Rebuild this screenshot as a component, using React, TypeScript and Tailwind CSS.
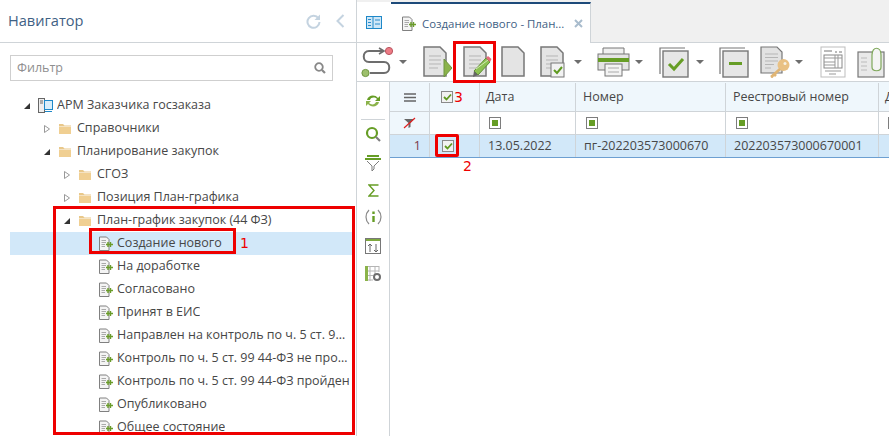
import type { ReactNode } from "react";

const font = "font-['Open_Sans','Noto_Sans',sans-serif]";
const rowText = "text-[12.5px] text-[#474747]";
const markText = "absolute font-['DejaVu_Sans',sans-serif] text-[14px] leading-[18px] text-[#ee0000]";

function Arrow({ open }: { open?: boolean }) {
  return (
    <svg width="8" height="8" viewBox="0 0 8 8" className="shrink-0">
      {open ? (
        <path d="M1 7 L7 7 L7 1 Z" fill="#333" />
      ) : (
        <path d="M1.500 0.500 L6.500 4 L1.500 7.500 Z" fill="#fff" stroke="#999" />
      )}
    </svg>
  );
}

function Folder() {
  return (
    <svg width="14" height="12" viewBox="0 0 14 12" className="shrink-0">
      <path d="M1 1 H5 L6.500 2.500 H13 V3.500 H1 Z" fill="#e9c88a" />
      <rect x="1" y="4" width="12" height="7" fill="#f0cf92" />
    </svg>
  );
}

function PlanDoc() {
  return (
    <svg width="16" height="16" viewBox="0 0 16 16" className="shrink-0">
      <path d="M1.500 1 H8.500 L11 3.500 V14.500 H1.500 Z" fill="#f4f4f4" stroke="#808080" />
      <path d="M3.500 4.500 H8 M3.500 6.500 H8 M3.500 8.500 H7 M3.500 10.500 H7" stroke="#aaa" />
      <path d="M8 8.500 H15 M10 6 V11 M12.500 6 V11" stroke="#6a9c2a" strokeWidth="1.400" />
    </svg>
  );
}

function TreeRow({
  pad,
  label,
  open,
  icon,
}: {
  pad: string;
  label: string;
  open?: boolean;
  icon?: ReactNode;
}) {
  return (
    <div className={`flex h-[23px] items-center ${pad}`}>
      <Arrow open={open} />
      <div className="ml-[7px]">{icon ?? <Folder />}</div>
      <span className={`${icon ? "ml-[4px]" : "ml-[5px]"} truncate ${rowText}`}>{label}</span>
    </div>
  );
}

function LeafRow({ label, selected }: { label: string; selected?: boolean }) {
  return (
    <div className={`flex h-[23px] items-center pl-[88px] ${selected ? "bg-[#d2e8f9]" : ""}`}>
      <PlanDoc />
      <span className={`ml-[3px] truncate ${rowText}`}>{label}</span>
    </div>
  );
}

function Caret({ className = "" }: { className?: string }) {
  return (
    <svg width="8" height="4" viewBox="0 0 8 4" className={`shrink-0 ${className}`}>
      <path d="M0 0 H8 L4 4 Z" fill="#6e6e6e" />
    </svg>
  );
}

function DocLines() {
  return <path d="M6 10 H18 M6 14 H18 M6 18 H18 M6 22 H15" stroke="#b5b5b5" />;
}

function PageShape() {
  return <path d="M1 1 H17 L23 7 V30 H1 Z" fill="#e4e4e4" stroke="#777" strokeWidth="1.500" />;
}

function Toolbar() {
  return (
    <div className="flex h-[39px] items-center border-b border-[#cfd4d8]">
      <svg width="32" height="32" viewBox="0 0 32 32" className="ml-[4px] shrink-0">
        <path d="M23 5 H8 C1 5 1 16 8 16 H23 C30 16 30 27 23 27 H9" fill="none" stroke="#6d6d6d" strokeWidth="2" />
        <path d="M18 2 L23 5 L18 8" fill="none" stroke="#6d6d6d" strokeWidth="1.600" />
        <circle cx="28" cy="5" r="3.600" fill="#ee7b85" stroke="#b85560" />
        <circle cx="4.500" cy="27" r="3.600" fill="#9dc06c" stroke="#6f9640" />
      </svg>
      <Caret className="ml-[6px]" />
      <svg width="29" height="32" viewBox="0 0 29 32" className="ml-[16px] shrink-0">
        <PageShape />
        <DocLines />
        <path d="M21 13 L29 22 L21 31 Z" fill="#8bb34a" stroke="#6f9640" />
      </svg>
      <svg width="29" height="33" viewBox="0 0 29 33" className="ml-[11px] shrink-0">
        <PageShape />
        <DocLines />
        <path d="M11 25 L23 12 L27 16 L15 29 Z" fill="#8cc152" stroke="#5f8f35" />
        <path d="M13 23 L25 14" stroke="#d5e8b8" />
        <path d="M23 12 L25 10 L28.500 13 L27 16 Z" fill="#e66b7a" />
        <path d="M11 25 L15 29 L10 31 Z" fill="#666" />
      </svg>
      <svg width="24" height="32" viewBox="0 0 24 32" className="ml-[9px] shrink-0">
        <PageShape />
      </svg>
      <svg width="25" height="33" viewBox="0 0 25 33" className="ml-[15px] shrink-0">
        <PageShape />
        <DocLines />
        <rect x="11" y="17" width="13" height="14" fill="#f2f2f2" stroke="#777" />
        <path d="M14 24 L17 27 L22 21" fill="none" stroke="#5f9a20" strokeWidth="2" />
      </svg>
      <Caret className="ml-[9px]" />
      <svg width="33" height="30" viewBox="0 0 33 30" className="ml-[15px] shrink-0">
        <path d="M6 7 V1 H27 V7" fill="#f0f0f0" stroke="#777" />
        <rect x="1" y="7" width="31" height="16" fill="#e4e4e4" stroke="#777" />
        <rect x="1" y="11" width="31" height="4" fill="#669d25" />
        <rect x="8" y="17" width="17" height="12" fill="#f4f4f4" stroke="#777" />
        <path d="M11 21 H22 M11 25 H22" stroke="#aaa" />
      </svg>
      <Caret className="ml-[5px]" />
      <svg width="30" height="31" viewBox="0 0 30 31" className="ml-[16px] shrink-0">
        <path d="M1 27 V1 H26" fill="none" stroke="#777" strokeWidth="1.200" />
        <rect x="4" y="4" width="25" height="26" fill="#e6e6e6" stroke="#777" strokeWidth="1.400" />
        <path d="M10 17 L15 22 L24 12" fill="none" stroke="#669d25" strokeWidth="3" />
      </svg>
      <Caret className="ml-[7px]" />
      <svg width="30" height="31" viewBox="0 0 30 31" className="ml-[15px] shrink-0">
        <path d="M1 27 V1 H26" fill="none" stroke="#777" strokeWidth="1.200" />
        <rect x="4" y="4" width="25" height="26" fill="#e6e6e6" stroke="#777" strokeWidth="1.400" />
        <rect x="10" y="15" width="13" height="3" fill="#669d25" />
      </svg>
      <svg width="30" height="32" viewBox="0 0 30 32" className="ml-[11px] shrink-0">
        <path d="M1 1 H17 L22 6 V27 H1 Z" fill="#e2e2e2" stroke="#777" strokeWidth="1.200" />
        <path d="M5 8 H18 M5 11.500 H18 M5 15 H18 M5 18.500 H14 M5 22 H11" stroke="#b5b5b5" strokeWidth="1.200" />
        <circle cx="23.500" cy="19" r="6" fill="#e9c184" />
        <circle cx="25" cy="17.500" r="1.500" fill="#f7f2e6" />
        <path d="M20 23 L11 31 M14 28 L16 30 M11.500 30 L13 31.500" stroke="#e0b574" strokeWidth="2.600" />
      </svg>
      <Caret className="ml-[5px]" />
      <svg width="26" height="32" viewBox="0 0 26 32" className="ml-[17px] shrink-0">
        <rect x="1" y="1" width="24" height="30" fill="#fff" stroke="#bdbdbd" />
        <path d="M4 5 H12 M15 6 H17 M19 6 H22" stroke="#777" strokeWidth="1.200" />
        <rect x="4" y="9" width="18" height="13" fill="#fff" stroke="#888" />
        <path d="M4 12 H22 M15 9 V22 M18 9 V22 M4 16 H15 M4 19 H15 M5 25 H21 M9 28 H16" stroke="#999" />
      </svg>
      <svg width="28" height="31" viewBox="0 0 28 31" className="ml-[11px] shrink-0">
        <rect x="1" y="5" width="26" height="25" fill="#e9e9e9" stroke="#777" strokeWidth="1.200" />
        <path d="M4 11 H10 M4 15 H10 M4 19 H10 M4 23 H10" stroke="#bbb" strokeWidth="1.200" />
        <path d="M15 8 C15 -1 24 -1 24 8 V20 C24 25 15 25 15 20 Z" fill="#f4f4f4" stroke="#7fa85a" strokeWidth="1.200" />
      </svg>
    </div>
  );
}

function SideRail() {
  return (
    <div className="flex w-[33px] shrink-0 flex-col items-center border-r border-[#cfd4d8] pt-[12px]">
      <svg width="16" height="14" viewBox="0 0 16 14">
        <path d="M2 6 C3 1 10 0 13 4 L15 2 V7 H10 L12 5 C10 3 6 3 5 6 Z" fill="#669d25" />
        <path d="M14 8 C13 13 6 14 3 10 L1 12 V7 H6 L4 9 C6 11 10 11 11 8 Z" fill="#8bb34a" />
      </svg>
      <div className="mt-[11px] h-px w-[24px] bg-[#cfd4d8]" />
      <svg width="16" height="16" viewBox="0 0 16 16" className="mt-[6px]">
        <circle cx="7" cy="7" r="5" fill="#fff" stroke="#669d25" strokeWidth="2.200" />
        <path d="M11 11 L15 15" stroke="#7d7d7d" strokeWidth="2.200" />
      </svg>
      <svg width="16" height="18" viewBox="0 0 16 18" className="mt-[11px]">
        <path d="M0 6 H16 M2 3 H14" stroke="#669d25" strokeWidth="2" />
        <path d="M2 8 L7 13 V18 L9 16 V13 L14 8" fill="none" stroke="#7d7d7d" />
      </svg>
      <svg width="11" height="13" viewBox="0 0 11 13" className="mt-[13px]">
        <path d="M10.500 1 H1 L6 6.500 L1 12 H10.500" fill="none" stroke="#669d25" strokeWidth="1.400" />
      </svg>
      <svg width="17" height="16" viewBox="0 0 17 16" className="mt-[12px]">
        <path d="M4 1 C0 5 0 11 4 15 M13 1 C17 5 17 11 13 15" fill="none" stroke="#8a8a8a" strokeWidth="1.200" />
        <path d="M8.500 2.500 V5 M8.500 7 V13" stroke="#669d25" strokeWidth="2.400" />
      </svg>
      <svg width="16" height="16" viewBox="0 0 16 16" className="mt-[13px]">
        <rect x="0.500" y="0.500" width="15" height="15" fill="#fff" stroke="#777" />
        <rect x="1" y="1" width="14" height="2" fill="#7da83e" />
        <path d="M5 14 V6 M3 8 L5 6 L7 8 M11 6 V14 M9 12 L11 14 L13 12" fill="none" stroke="#666" />
      </svg>
      <svg width="17" height="16" viewBox="0 0 17 16" className="mt-[12px]">
        <path d="M0.500 0.500 H14 M0.500 5 H14 M0.500 9.500 H8 M0.500 14 H8 M5 0 V15 M10 0 V8 M14 0 V6" stroke="#b5b5b5" />
        <rect x="0" y="0" width="3" height="15" fill="#8bb34a" />
        <circle cx="12" cy="11" r="3" fill="none" stroke="#6d6d6d" strokeWidth="2" />
      </svg>
    </div>
  );
}

function CheckBox() {
  return (
    <span className="flex h-[12px] w-[12px] items-center justify-center border border-[#8a8a8a] bg-[#f2f2f2]">
      <svg width="9" height="8" viewBox="0 0 9 8">
        <path d="M1 4 L3.500 6.500 L8 1.500" fill="none" stroke="#5f9a20" strokeWidth="1.800" />
      </svg>
    </span>
  );
}

function FilterBox() {
  return (
    <span className="flex h-[12px] w-[12px] items-center justify-center border border-[#7d7d7d] bg-white">
      <span className="h-[6px] w-[6px] bg-[#669d25]" />
    </span>
  );
}

const colClass = "flex shrink-0 items-center border-r border-[#cfd4d8]";

function Grid() {
  const cols = ["w-[96px]", "w-[150px]", "w-[153px]"];
  return (
    <div className="min-w-0 flex-1 overflow-hidden">
      <div className={`flex h-[29px] bg-[#eff7fc] pt-[1px] ${rowText}`}>
        <div className={`${colClass} w-[40px] justify-center`}>
          <svg width="12" height="9" viewBox="0 0 12 9">
            <path d="M0 1 H12 M0 4.500 H12 M0 8 H12" stroke="#666" strokeWidth="1.600" />
          </svg>
        </div>
        <div className={`${colClass} w-[50px] pl-[11px]`}>
          <CheckBox />
        </div>
        <div className={`${colClass} ${cols[0]} pl-[6px]`}>Дата</div>
        <div className={`${colClass} ${cols[1]} pl-[7px]`}>Номер</div>
        <div className={`${colClass} ${cols[2]} pl-[7px]`}>Реестровый номер</div>
        <div className="flex shrink-0 items-center pl-[6px]">Дата</div>
      </div>
      <div className="flex h-[24px] border-y border-[#cfd4d8] bg-white">
        <div className={`${colClass} w-[40px] justify-center bg-[#eff7fc]`}>
          <svg width="13" height="12" viewBox="0 0 13 12">
            <path d="M1 2 H11 L7.500 6 V10 L5.500 11 V6 Z" fill="#666" />
            <path d="M1 11 L12 1" stroke="#e02020" strokeWidth="1.200" />
          </svg>
        </div>
        <div className={`${colClass} w-[50px]`} />
        <div className={`${colClass} ${cols[0]} pl-[9px]`}>
          <FilterBox />
        </div>
        <div className={`${colClass} ${cols[1]} pl-[10px]`}>
          <FilterBox />
        </div>
        <div className={`${colClass} ${cols[2]} pl-[10px]`}>
          <FilterBox />
        </div>
        <div className="flex shrink-0 items-center pl-[9px]">
          <FilterBox />
        </div>
      </div>
      <div className={`flex h-[23px] border-b border-[#6d9fd1] bg-[#d2e8f9] ${rowText}`}>
        <div className={`${colClass} w-[40px] justify-end pr-[8px] text-[#7a3a4a]`}>1</div>
        <div className={`${colClass} w-[50px] pl-[12px]`}>
          <CheckBox />
        </div>
        <div className={`${colClass} ${cols[0]} pl-[8px]`}>13.05.2022</div>
        <div className={`${colClass} ${cols[1]} pl-[8px]`}>пг-202203573000670</div>
        <div className={`${colClass} ${cols[2]} pl-[8px]`}>202203573000670001</div>
      </div>
    </div>
  );
}

const leafItems = [
  "На доработке",
  "Согласовано",
  "Принят в ЕИС",
  "Направлен на контроль по ч. 5 ст. 99 44-ФЗ",
  "Контроль по ч. 5 ст. 99 44-ФЗ не пройден",
  "Контроль по ч. 5 ст. 99 44-ФЗ пройден",
  "Опубликовано",
  "Общее состояние",
];

export default function App() {
  return (
    <div className={`relative flex h-[436px] w-[889px] overflow-hidden bg-white ${font}`}>
      <div className="flex w-[357px] shrink-0 flex-col border-r border-[#cfd4d8]">
        <div className="flex h-[43px] shrink-0 items-center border-b border-[#cfd4d8] pl-[8px] pr-[11px]">
          <span className="text-[14.6px] text-[#3f6184]">Навигатор</span>
          <svg width="15" height="15" viewBox="0 0 15 15" className="ml-auto">
            <path d="M12.500 4.500 A6 6 0 1 0 13.500 8" fill="none" stroke="#c4d3e0" strokeWidth="2" />
            <path d="M14 0.500 V6 H8.500 Z" fill="#c4d3e0" />
          </svg>
          <svg width="9" height="14" viewBox="0 0 9 14" className="ml-[15px]">
            <path d="M7.500 1 L1.500 7 L7.500 13" fill="none" stroke="#c4d3e0" strokeWidth="2" />
          </svg>
        </div>
        <div className="ml-[10px] mr-[23px] mt-[12px] flex h-[26px] shrink-0 items-center border border-[#cfcfcf] pl-[6px] pr-[6px]">
          <span className="text-[12.5px] text-[#8f8f8f]">Фильтр</span>
          <svg width="12" height="12" viewBox="0 0 12 12" className="ml-auto">
            <circle cx="5" cy="5" r="3.800" fill="none" stroke="#888" strokeWidth="1.800" />
            <path d="M8 8 L11 11" stroke="#888" strokeWidth="2.200" />
          </svg>
        </div>
        <div className="mt-[13px] min-h-0 flex-1 overflow-hidden">
          <TreeRow
            pad="pl-[23px]"
            label="АРМ Заказчика госзаказа"
            open
            icon={
              <svg width="15" height="15" viewBox="0 0 15 15" className="shrink-0">
                <rect x="0.500" y="0.500" width="6" height="14" fill="#eee" stroke="#666" />
                <path d="M2 3 H5 M2 5 H5" stroke="#666" />
                <rect x="6.500" y="2.500" width="8" height="9" fill="#d8eefb" stroke="#1e88c8" />
                <path d="M7 13.500 H14" stroke="#1e88c8" />
              </svg>
            }
          />
          <TreeRow pad="pl-[43px]" label="Справочники" />
          <TreeRow pad="pl-[43px]" label="Планирование закупок" open />
          <TreeRow pad="pl-[63px]" label="СГОЗ" />
          <TreeRow pad="pl-[63px]" label="Позиция План-графика" />
          <TreeRow pad="pl-[63px]" label="План-график закупок (44 ФЗ)" open />
          <div className="ml-[10px] mr-[4px]">
            <LeafRow label="Создание нового" selected />
            {leafItems.map((item) => (
              <LeafRow key={item} label={item} />
            ))}
          </div>
        </div>
      </div>

      <div className="flex min-w-0 flex-1 flex-col">
        <div className="flex h-[43px] shrink-0 bg-[#f0f0f0] pt-[2px]">
          <div className="flex w-[34px] items-center justify-center border-b border-[#cfd4d8] bg-white">
            <svg width="16" height="13" viewBox="0 0 16 13">
              <rect x="0.500" y="0.500" width="15" height="12" fill="#cfe7f7" stroke="#1e88c8" />
              <path d="M7 1 V12" stroke="#1e88c8" />
              <path d="M2 3.500 H5 M2 6.500 H5 M2 9.500 H5 M9 4 H14 M9 8 H14" stroke="#2a8ccc" />
            </svg>
          </div>
          <div className="flex w-[200px] items-center whitespace-nowrap border-r border-t-2 border-r-[#cfd4d8] border-t-[#1d4a7a] bg-white pl-[10px]">
            <PlanDoc />
            <span className="ml-[5px] text-[11.4px] text-[#3f6184]">Создание нового - План...</span>
            <svg width="9" height="9" viewBox="0 0 9 9" className="ml-auto mr-[7px] shrink-0">
              <path d="M1 1 L8 8 M8 1 L1 8" stroke="#a9bccd" strokeWidth="2" />
            </svg>
          </div>
          <div className="flex-1 border-b border-[#cfd4d8]" />
        </div>
        <Toolbar />
        <div className="flex min-h-0 flex-1">
          <SideRail />
          <Grid />
        </div>
      </div>

      {/* красные рамки и пометки поверх скриншота */}
      <div className="absolute left-[53px] top-[206px] h-[229px] w-[302px] border-[3px] border-[#ee0000]" />
      <div className="absolute left-[89px] top-[228px] h-[26px] w-[147px] border-[3px] border-[#ee0000]" />
      <div className="absolute left-[453px] top-[41px] h-[42px] w-[43px] border-[3px] border-[#ee0000]" />
      <div className="absolute left-[435px] top-[134px] h-[23px] w-[24px] rounded-[2px] border-[3px] border-[#ee0000]" />
      <span className={`${markText} left-[240px] top-[234px]`}>1</span>
      <span className={`${markText} left-[463px] top-[157px]`}>2</span>
      <span className={`${markText} left-[454px] top-[88px]`}>3</span>
    </div>
  );
}
